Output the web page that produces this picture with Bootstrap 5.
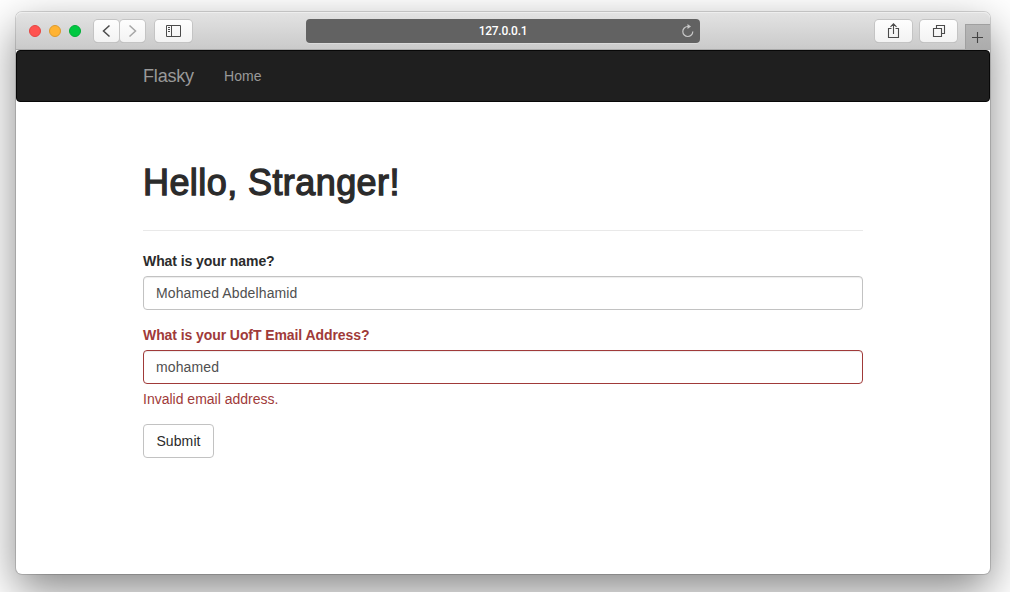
<!DOCTYPE html>
<html lang="en">
<head>
<meta charset="utf-8">
<meta name="viewport" content="width=device-width, initial-scale=1">
<title>Flasky</title>
<link href="https://cdn.jsdelivr.net/npm/bootstrap@5.3.0/dist/css/bootstrap.min.css" rel="stylesheet">
<style>
  body { font-family: "Liberation Sans", Arial, sans-serif; font-size: 14px; line-height: 20px; color: #2b2b2b; background: #fff; height: 592px; overflow: hidden; padding: 12px 20px 18px 16px; }
  .window { height: 562px; width: 974px; border-radius: 6px; background: #fff; box-shadow: 0 0 0 1px rgba(0,0,0,.15), 0 16px 44px rgba(0,0,0,.48); }
  .titlebar { height: 38px; padding-left: 13px; border-radius: 6px 6px 0 0; background: linear-gradient(#e3e3e3, #cacaca); border-bottom: 1px solid #a9a9a9; box-shadow: inset 0 1px #eee; }
  .light { width: 12px; height: 12px; border: 1px solid; }
  .light-close { background: #ff5350; border-color: #e54542; }
  .light-min { background: #ffb333; border-color: #dd9a2c; }
  .light-max { background: #00c841; border-color: #00ad37; }
  .tool { height: 22px; width: 37px; margin-top: 1px; padding: 0; border: 0; border-radius: 4px; background: linear-gradient(#fefefe, #f3f3f3); box-shadow: 0 0 0 1px #c4c4c4, 0 1px 0 0 #b2b2b2; color: #4b4b4b; }
  .tool:hover { background: #f8f8f8; }
  .tool-narrow { width: 25px; }
  .tool svg { display: block; }
  .address { width: 394px; height: 24px; margin-left: 114px; border-radius: 4px; background: #626262; box-shadow: 0 1px rgba(255,255,255,.25); color: #fff; font: 500 12px/25px Roboto, sans-serif; letter-spacing: -.25px; }
  .reload { right: 5px; top: 5px; }
  .newtab { width: 25px; height: 25px; margin-left: 8px; background: linear-gradient(#b6b6b6, #acacac); border: solid #a0a0a0; border-width: 1px 0 0 1px; }
  .site-nav { height: 52px; padding: 0; background: #1f1f1f; border: 1px solid #080808; border-radius: 4px; }
  .page { width: 720px; margin-left: 127px; }
  .site-nav .page { margin-left: 126px; }
  .site-nav .navbar-brand { color: #999; font-size: 18px; padding: 0; margin: 0 30px 0 0; letter-spacing: -.18px; line-height: 20px; }
  .site-nav .nav-link { color: #999; padding: 0; letter-spacing: .1px; }
  h1 { font-size: 36px; line-height: 40px; font-weight: 400; -webkit-text-stroke: 1.3px #2b2b2b; letter-spacing: .42px; margin: 61px 0 27px; }
  .rule { border-bottom: 1px solid #e9e9e9; }
  .form-label { font-weight: 700; margin: 0 0 5px; display: block; letter-spacing: -.08px; }
  .form-control { height: 34px; padding: 6px 12px; font-size: 14px; line-height: 20px; border: 1px solid #c2c2c2; border-radius: 4px; color: #505050; letter-spacing: .12px; box-shadow: inset 0 1px 1px rgba(0,0,0,.075); }
  .has-error { color: #a03a39; }
  .has-error .form-control { border-color: #a03a39; }
  .field { margin-bottom: 15px; }
  .submit { width: 71px; height: 34px; padding: 6px 0; font-size: 14px; line-height: 20px; border: 1px solid #c2c2c2; border-radius: 4px; background: #fff; color: #2b2b2b; letter-spacing: .1px; }
</style>
</head>
<body>
<div class="window">
  <header class="titlebar d-flex align-items-center">
    <div class="d-flex gap-2">
      <span class="light light-close rounded-circle"></span><span class="light light-min rounded-circle"></span><span class="light light-max rounded-circle"></span>
    </div>
    <button class="tool tool-narrow btn" style="margin-left:13px" aria-label="Back"><svg width="25" height="22" fill="none" stroke="currentColor" stroke-width="1.5"><path d="M15.500 5.500 9.500 11l6 5.500"/></svg></button>
    <button class="tool tool-narrow btn" style="margin-left:1px" aria-label="Forward"><svg width="25" height="22" fill="none" stroke="#a6a6a6" stroke-width="1.5"><path d="m9.500 5.500 6 5.500-6 5.500"/></svg></button>
    <button class="tool btn" style="margin-left:10px" aria-label="Sidebar"><svg width="37" height="22" fill="none" stroke="currentColor"><path d="M11.500 5.500h14v11h-14zM16.500 5.500v11M13 7.500h2M13 9.500h2M13 11.500h2"/></svg></button>
    <div class="address position-relative text-center">127.0.0.1
      <svg class="reload position-absolute" width="14" height="14" fill="none" stroke="#c8c8c8" stroke-width="1.2"><path d="M8 2.500H6.800a5 5 0 1 0 5 5"/><path d="M6.500 0v5L10 2.500z" fill="#c8c8c8" stroke="none"/></svg>
    </div>
    <button class="tool btn" style="margin-left:175px" aria-label="Share"><svg width="37" height="22" fill="none" stroke="currentColor" stroke-width="1.1"><path d="M16.500 8.500h-3v9h10v-9h-3M18.500 14V4M15.500 6.800l3-3 3 3"/></svg></button>
    <button class="tool btn" style="margin-left:8px" aria-label="Tabs"><svg width="37" height="22" fill="none" stroke="currentColor" stroke-width="1.1"><path d="M13.500 8.500h8v8h-8zM16.500 8.500v-3h8v8h-3"/></svg></button>
    <div class="newtab align-self-end"><svg class="d-block" width="24" height="24" fill="none" stroke="#444" stroke-width="1.1"><path d="M11.500 7v11M6 12.500h11"/></svg></div>
  </header>
  <nav class="site-nav navbar">
    <div class="page d-flex align-items-center">
      <a class="navbar-brand" href="#">Flasky</a>
      <a class="nav-link" href="#">Home</a>
    </div>
  </nav>
  <main class="page">
    <h1>Hello, Stranger!</h1>
    <div class="rule mb-3"></div>
    <form class="pt-1">
      <div class="field">
        <label class="form-label" for="name">What is your name?</label>
        <input class="form-control" id="name" type="text" value="Mohamed Abdelhamid">
      </div>
      <div class="field has-error">
        <label class="form-label" for="email">What is your UofT Email Address?</label>
        <input class="form-control" id="email" type="text" value="mohamed">
        <p class="mb-0" style="margin-top:5px">Invalid email address.</p>
      </div>
      <button class="submit btn" type="button">Submit</button>
    </form>
  </main>
</div>
<script src="https://cdn.jsdelivr.net/npm/bootstrap@5.3.0/dist/js/bootstrap.bundle.min.js"></script>
</body>
</html>
